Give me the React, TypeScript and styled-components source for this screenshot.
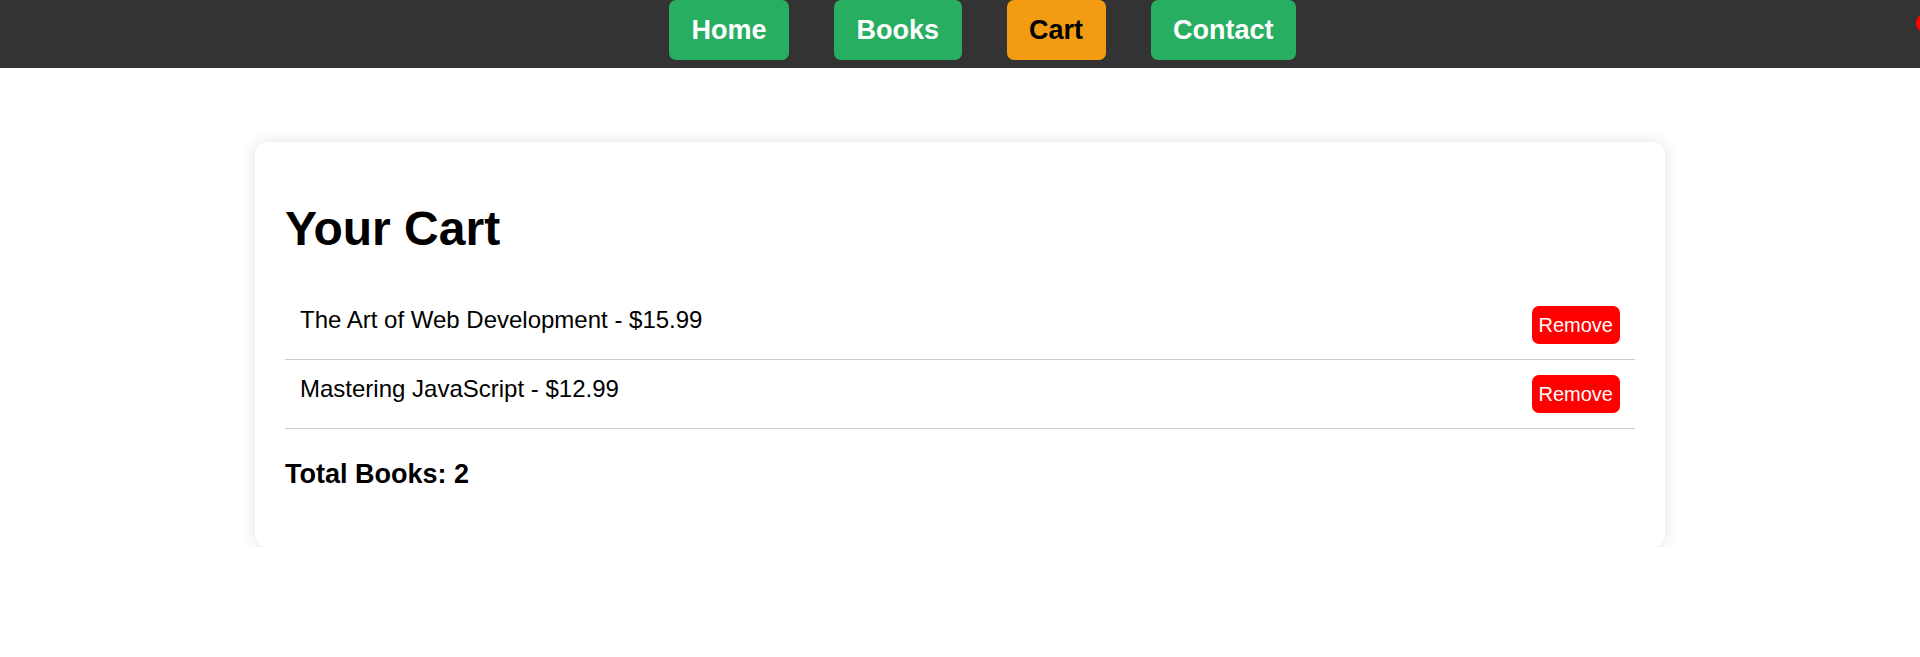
import React from "react";
import styled, { createGlobalStyle } from "styled-components";

const GlobalStyle = createGlobalStyle`
  * {
    box-sizing: border-box;
  }

  body {
    margin: 0;
    background: #ffffff;
    font-family: "Liberation Sans", Arial, sans-serif;
    color: #000000;
  }
`;

type CartItem = {
  id: number;
  title: string;
  price: number;
};

const items: CartItem[] = [
  { id: 1, title: "The Art of Web Development", price: 15.99 },
  { id: 2, title: "Mastering JavaScript", price: 12.99 },
];

const links = ["Home", "Books", "Cart", "Contact"];

function App() {
  return (
    <>
      <GlobalStyle />
      <NavBar>
        <NavList>
          {links.map((link) => (
            <NavLink key={link} $active={link === "Cart"}>
              {link}
            </NavLink>
          ))}
        </NavList>
        <CartBadge />
      </NavBar>

      <Main>
        <CartCard>
          <Title>Your Cart</Title>
          <ItemList>
            {items.map((item) => (
              <ItemRow key={item.id}>
                <span>
                  {item.title} - ${item.price.toFixed(2)}
                </span>
                <RemoveButton>Remove</RemoveButton>
              </ItemRow>
            ))}
          </ItemList>
          <Total>Total Books: {items.length}</Total>
        </CartCard>
      </Main>
    </>
  );
}

const NavBar = styled.nav`
  position: relative;
  height: 68px;
  background: #333333;
  overflow: hidden;
`;

const NavList = styled.div`
  display: flex;
  justify-content: center;
  gap: 45px;
  padding-left: 45px;
`;

const NavLink = styled.a<{ $active?: boolean }>`
  display: flex;
  align-items: center;
  height: 60px;
  padding: 0 22.5px;
  border-radius: 7px;
  background: ${({ $active }) => ($active ? "#f39c12" : "#27ae60")};
  color: ${({ $active }) => ($active ? "#000000" : "#ffffff")};
  font-size: 27px;
  font-weight: 700;
  line-height: 31px;
  text-decoration: none;
  cursor: pointer;
`;

const CartBadge = styled.span`
  position: absolute;
  top: 13px;
  left: 1916px;
  width: 20px;
  height: 20px;
  border-radius: 50%;
  background: #ff0000;
`;

const Main = styled.main`
  display: flex;
  justify-content: center;
  padding-top: 74px;
`;

const CartCard = styled.section`
  width: 1410px;
  padding: 30px 30px 30px;
  background: #ffffff;
  border-radius: 12px;
  box-shadow: 0 0 15px rgba(0, 0, 0, 0.12);
`;

const Title = styled.h1`
  margin: 29px 0 35px;
  font-size: 48px;
  line-height: 55px;
  font-weight: 700;
`;

const ItemList = styled.ul`
  list-style: none;
  margin: 0;
  padding: 0;
`;

const ItemRow = styled.li`
  display: flex;
  justify-content: space-between;
  align-items: flex-start;
  padding: 15px 15px;
  border-bottom: 1px solid #cccccc;
  font-size: 24px;
  line-height: 28px;
`;

const RemoveButton = styled.button`
  height: 38px;
  padding: 0 7px;
  border: none;
  border-radius: 7px;
  background: #ff0000;
  color: #ffffff;
  font-family: "Liberation Sans", Arial, sans-serif;
  font-size: 20px;
  cursor: pointer;
`;

const Total = styled.p`
  margin: 30px 0 27px;
  font-size: 27px;
  line-height: 31px;
  font-weight: 700;
`;

export default App;
